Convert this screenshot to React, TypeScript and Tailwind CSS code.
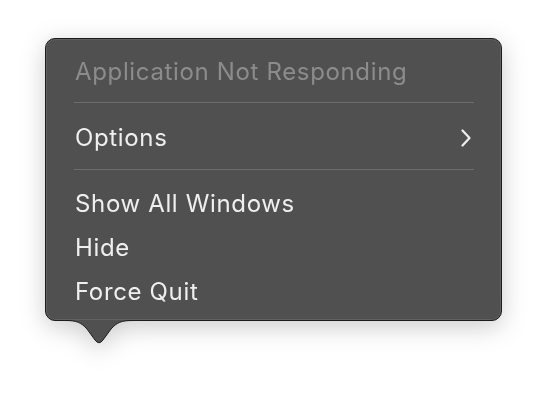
export default function App() {
  return (
    <div className="h-[404px] w-[548px] overflow-hidden bg-white font-['Inter',sans-serif]">
      <div className="ml-[45px] pt-[38px]">
        <div className="relative w-[457px] drop-shadow-[0_6px_12px_rgba(0,0,0,0.2)]">
          <div className="h-[283px] rounded-[10px] border border-[#1c1c1c] bg-[#505050] pb-[8px] pt-[10px] shadow-[inset_0_0_0_1px_rgba(255,255,255,0.1)]">
            <MenuRow label="Application Not Responding" muted />
            <Separator first />
            <MenuRow label="Options" submenu />
            <Separator />
            <MenuRow label="Show All Windows" />
            <MenuRow label="Hide" />
            <MenuRow label="Force Quit" />
          </div>
          <Tail />
        </div>
      </div>
    </div>
  );
}

function MenuRow({ label, muted, submenu }: { label: string; muted?: boolean; submenu?: boolean }) {
  return (
    <div className="flex h-[44px] items-center justify-between pl-[29px] pr-[30px] pt-px">
      <span
        className={[
          "text-[24px] leading-none tracking-[0.65px]",
          muted ? "text-[#8c8c8c]" : "text-[#efefef]",
        ].join(" ")}
      >
        {label}
      </span>
      {submenu && <ChevronIcon />}
    </div>
  );
}

function Separator({ first }: { first?: boolean }) {
  return (
    <div className={first ? "pb-[12px] pt-[9px]" : "pb-[11px] pt-[10px]"}>
      <div className="ml-[28px] mr-[27px] h-px bg-[#6c6c6c]" />
    </div>
  );
}

function ChevronIcon() {
  return (
    <svg aria-hidden="true" className="h-[18px] w-[10px]" fill="none" viewBox="0 0 10 18">
      <path d="M1.5 1.5 8.5 9l-7 7.5" stroke="#efefef" strokeLinecap="round" strokeLinejoin="round" strokeWidth="2.2" />
    </svg>
  );
}

function Tail() {
  return (
    <svg aria-hidden="true" className="absolute left-[20px] top-[282px] h-[26px] w-[68px]" viewBox="0 0 68 26">
      <path d="M0 0.5C12 0.5 16 2.5 22 9L30 20Q34 25.5 38 20L46 9C52 2.5 56 0.5 68 0.5V0H0Z" fill="#505050" />
      <path
        d="M0 0.5C12 0.5 16 2.5 22 9L30 20Q34 25.5 38 20L46 9C52 2.5 56 0.5 68 0.5"
        fill="none"
        stroke="#1c1c1c"
        strokeWidth="1"
      />
    </svg>
  );
}
